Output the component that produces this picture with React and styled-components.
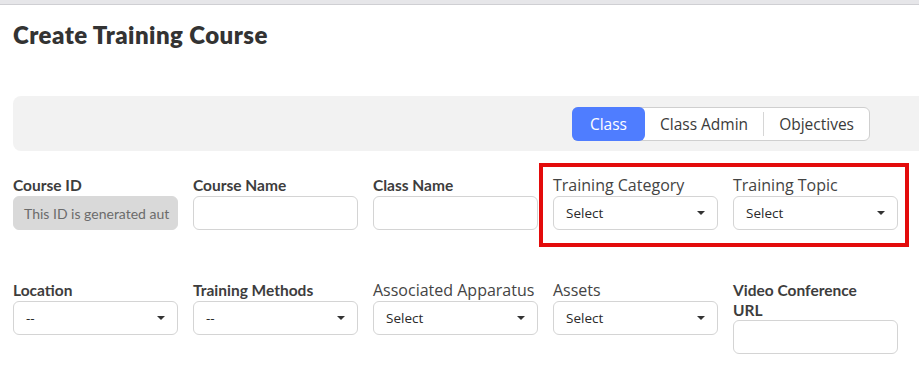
import React from "react";
import styled, { createGlobalStyle } from "styled-components";

const GlobalStyle = createGlobalStyle`
  html, body {
    margin: 0;
    padding: 0;
    background: #fff;
    overflow: hidden;
  }
  body {
    font-family: "Open Sans", "Liberation Sans", sans-serif;
    color: #333;
  }
`;

const Root = styled.div`
  position: relative;
  min-height: 376px;
`;

const TopStrip = styled.div`
  height: 4px;
  background: #e6e6e9;
  border-bottom: 1px solid #cfcfd3;
`;

const Page = styled.div`
  padding: 15px 0 0 13px;
`;

const Title = styled.h1`
  font-family: "Lato", "Open Sans", sans-serif;
  font-weight: 800;
  font-size: 24px;
  letter-spacing: 0.45px;
  line-height: 30px;
  color: #333;
  margin: 0;
`;

const TabBand = styled.div`
  margin-top: 46px;
  height: 55px;
  background: #f2f2f2;
  border-radius: 8px 0 0 8px;
  display: flex;
  align-items: center;
  justify-content: flex-end;
  padding-right: 49px;
`;

const TabGroup = styled.div`
  display: flex;
  align-items: stretch;
  height: 34px;
  background: #fff;
  border: 1px solid #cfcfcf;
  border-radius: 6px;
  box-sizing: border-box;
`;

const Tab = styled.button`
  font-family: "Open Sans", sans-serif;
  font-size: 15.5px;
  border: none;
  margin: ${(p) => (p.$active ? "-1px 0 -1px -1px" : "0")};
  padding: 0 ${(p) => (p.$active ? "18px" : "15px")};
  background: ${(p) => (p.$active ? "#4f7dff" : "transparent")};
  color: ${(p) => (p.$active ? "#fff" : "#3a3a3a")};
  border-radius: ${(p) => (p.$active ? "6px" : "0")};
  cursor: pointer;
`;

const Divider = styled.span`
  width: 1px;
  margin: 4px 0;
  background: #d6d6d6;
`;

const Grid = styled.div`
  display: grid;
  grid-template-columns: repeat(5, 165px);
  column-gap: 15px;
  margin-top: ${(p) => p.$top}px;
  align-items: start;
`;

const Field = styled.div`
  display: flex;
  flex-direction: column;
`;

const Label = styled.label`
  font-family: ${(p) =>
    p.$bold ? '"Lato", "Open Sans", sans-serif' : '"Open Sans", sans-serif'};
  font-weight: ${(p) => (p.$bold ? 700 : 400)};
  font-size: ${(p) => (p.$bold ? "15.5px" : "16px")};
  line-height: 20px;
  color: ${(p) => (p.$bold ? "#3d3d3d" : "#444")};
  margin-bottom: ${(p) => (p.$narrow ? "0" : "1px")};
  max-width: ${(p) => (p.$narrow ? "140px" : "none")};
  white-space: ${(p) => (p.$narrow ? "normal" : "nowrap")};
`;

const Box = styled.div`
  height: 34px;
  box-sizing: border-box;
  border: 1px solid ${(p) => (p.$disabled ? "#d9d9d9" : "#d4d4d4")};
  background: ${(p) => (p.$disabled ? "#d9d9d9" : "#fff")};
  border-radius: 6px;
  display: flex;
  align-items: center;
  justify-content: space-between;
  padding: 0 12px 0 ${(p) => (p.$disabled ? "10px" : "12px")};
  font-size: ${(p) => (p.$disabled ? "14px" : "13.5px")};
  color: ${(p) => (p.$disabled ? "#6b6b6b" : "#2a2a2a")};
  font-family: ${(p) =>
    p.$disabled ? '"Lato", "Open Sans", sans-serif' : '"Open Sans", sans-serif'};
  white-space: nowrap;
  overflow: hidden;
`;

const Caret = styled.span`
  width: 0;
  height: 0;
  border-left: 4px solid transparent;
  border-right: 4px solid transparent;
  border-top: 4px solid #333;
  flex-shrink: 0;
`;

const Highlight = styled.div`
  position: absolute;
  left: 539px;
  top: 163px;
  width: 370px;
  height: 84px;
  border: 4px solid #e30b0b;
  box-sizing: border-box;
  pointer-events: none;
`;

const rowOne = [
  { label: "Course ID", bold: true, disabled: true, value: "This ID is generated aut" },
  { label: "Course Name", bold: true },
  { label: "Class Name", bold: true },
  { label: "Training Category", select: true, value: "Select" },
  { label: "Training Topic", select: true, value: "Select" },
];

const rowTwo = [
  { label: "Location", bold: true, select: true, value: "--" },
  { label: "Training Methods", bold: true, select: true, value: "--" },
  { label: "Associated Apparatus", select: true, value: "Select" },
  { label: "Assets", select: true, value: "Select" },
  { label: "Video Conference URL", bold: true, narrow: true },
];

const FormRow = ({ items, top }) => (
  <Grid $top={top}>
    {items.map((item) => (
      <Field key={item.label}>
        <Label $bold={item.bold} $narrow={item.narrow}>
          {item.label}
        </Label>
        <Box $disabled={item.disabled}>
          <span>{item.value}</span>
          {item.select && <Caret />}
        </Box>
      </Field>
    ))}
  </Grid>
);

const App = () => {
  return (
    <Root>
      <GlobalStyle />
      <TopStrip />
      <Page>
        <Title>Create Training Course</Title>
        <TabBand>
          <TabGroup>
            <Tab $active>Class</Tab>
            <Tab>Class Admin</Tab>
            <Divider />
            <Tab>Objectives</Tab>
          </TabGroup>
        </TabBand>
        <FormRow items={rowOne} top={24} />
        <FormRow items={rowTwo} top={50} />
      </Page>
      <Highlight />
    </Root>
  );
};

export default App;
